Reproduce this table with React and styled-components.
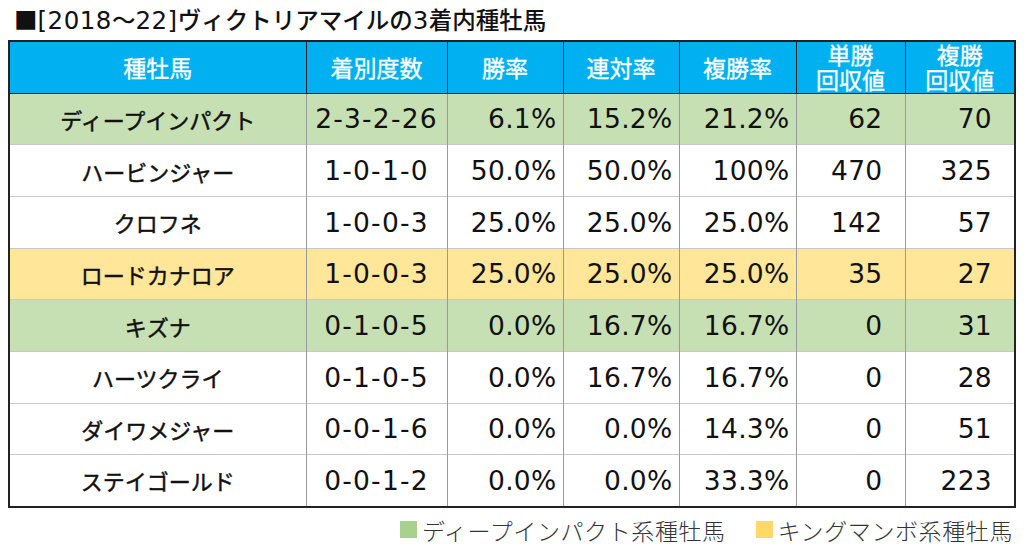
import styled, { createGlobalStyle } from "styled-components";

const GlobalStyle = createGlobalStyle`
  body {
    margin: 0;
    background: #fff;
    font-family: "Noto Sans CJK JP", "Noto Sans", sans-serif;
    color: #111;
  }
`;

const rows = [
  { name: "ディープインパクト", rec: "2-3-2-26", win: "6.1%", ren: "15.2%", fuku: "21.2%", tan: "62", fret: "70", line: "deep" },
  { name: "ハービンジャー", rec: "1-0-1-0", win: "50.0%", ren: "50.0%", fuku: "100%", tan: "470", fret: "325" },
  { name: "クロフネ", rec: "1-0-0-3", win: "25.0%", ren: "25.0%", fuku: "25.0%", tan: "142", fret: "57" },
  { name: "ロードカナロア", rec: "1-0-0-3", win: "25.0%", ren: "25.0%", fuku: "25.0%", tan: "35", fret: "27", line: "king" },
  { name: "キズナ", rec: "0-1-0-5", win: "0.0%", ren: "16.7%", fuku: "16.7%", tan: "0", fret: "31", line: "deep" },
  { name: "ハーツクライ", rec: "0-1-0-5", win: "0.0%", ren: "16.7%", fuku: "16.7%", tan: "0", fret: "28" },
  { name: "ダイワメジャー", rec: "0-0-1-6", win: "0.0%", ren: "0.0%", fuku: "14.3%", tan: "0", fret: "51" },
  { name: "ステイゴールド", rec: "0-0-1-2", win: "0.0%", ren: "0.0%", fuku: "33.3%", tan: "0", fret: "223" },
];

const rowColors = { deep: "#c6e0b4", king: "#ffe699" };

function App() {
  return (
    <Page>
      <GlobalStyle />
      <Title>
        ■<Latin>[2018</Latin>～<Latin>22]</Latin>ヴィクトリアマイルの<Latin>3</Latin>着内種牡馬
      </Title>
      <Table>
        <colgroup>
          <col style={{ width: 297 }} />
          <col style={{ width: 141 }} />
          <col style={{ width: 116 }} />
          <col style={{ width: 116 }} />
          <col style={{ width: 117 }} />
          <col style={{ width: 109 }} />
          <col style={{ width: 110 }} />
        </colgroup>
        <thead>
          <tr>
            <Th>種牡馬</Th>
            <Th>着別度数</Th>
            <Th>勝率</Th>
            <Th>連対率</Th>
            <Th>複勝率</Th>
            <Th $twoLine>単勝<br />回収値</Th>
            <Th $twoLine>複勝<br />回収値</Th>
          </tr>
        </thead>
        <tbody>
          {rows.map((r) => (
            <Row key={r.name} $bg={rowColors[r.line]}>
              <NameCell>{r.name}</NameCell>
              <NumCell $center>{r.rec}</NumCell>
              <NumCell>{r.win}</NumCell>
              <NumCell>{r.ren}</NumCell>
              <NumCell>{r.fuku}</NumCell>
              <NumCell $pad={22}>{r.tan}</NumCell>
              <NumCell $pad={22}>{r.fret}</NumCell>
            </Row>
          ))}
        </tbody>
      </Table>
      <Legend>
        <LegendItem>
          <Swatch $color="#a9d18e" />
          ディープインパクト系種牡馬
        </LegendItem>
        <LegendItem>
          <Swatch $color="#ffd966" />
          キングマンボ系種牡馬
        </LegendItem>
      </Legend>
    </Page>
  );
}

const Page = styled.div`
  width: 1024px;
  height: 550px;
  padding: 0 9px 0 8px;
  box-sizing: border-box;
`;

const Title = styled.div`
  height: 40px;
  padding: 3px 0 0 6px;
  box-sizing: border-box;
  font-size: 23.5px;
  font-weight: 500;
  line-height: 32px;
  color: #111;
  white-space: nowrap;
`;

const Latin = styled.span`
  font-family: "DejaVu Sans", sans-serif;
  font-size: 24.5px;
  letter-spacing: 0.5px;
`;

const Table = styled.table`
  width: 1007px;
  table-layout: fixed;
  border-collapse: collapse;
  border: 2px solid #222;
`;

const Th = styled.th`
  height: 52px;
  padding: 0;
  background: #00b0f0;
  color: #fff;
  font-size: 23px;
  font-weight: 400;
  -webkit-text-stroke: 0.35px #fff;
  line-height: ${(p) => (p.$twoLine ? "25px" : "30px")};
  text-align: center;
  border: 1.5px solid #222;
  box-sizing: border-box;
`;

const Row = styled.tr`
  background: ${(p) => p.$bg || "#fff"};
`;

const Cell = styled.td`
  height: 51.7px;
  box-sizing: border-box;
  border-top: 1px solid #c8c8c8;
  border-left: 1px solid #9a9a9a;
  border-right: 1px solid #9a9a9a;
  white-space: nowrap;
  color: #111;
`;

const NameCell = styled(Cell)`
  padding: 0;
  font-size: 22px;
  font-weight: 400;
  -webkit-text-stroke: 0.45px #111;
  text-align: center;
`;

const NumCell = styled(Cell)`
  padding: 0 ${(p) => (p.$center ? 0 : p.$pad || 6)}px 0 0;
  font-family: "DejaVu Sans", sans-serif;
  font-size: 26.5px;
  text-align: ${(p) => (p.$center ? "center" : "right")};
  letter-spacing: ${(p) => (p.$center ? "1.2px" : "0.3px")};
`;

const Legend = styled.div`
  display: flex;
  justify-content: flex-end;
  gap: 30px;
  margin-top: 6px;
  padding-right: 2px;
  font-size: 23px;
  font-weight: 300;
  letter-spacing: 0.6px;
  color: #333;
  line-height: 32px;
`;

const LegendItem = styled.div`
  display: flex;
  align-items: center;
  gap: 5px;
`;

const Swatch = styled.span`
  width: 17px;
  height: 17px;
  background: ${(p) => p.$color};
`;

export default App;
